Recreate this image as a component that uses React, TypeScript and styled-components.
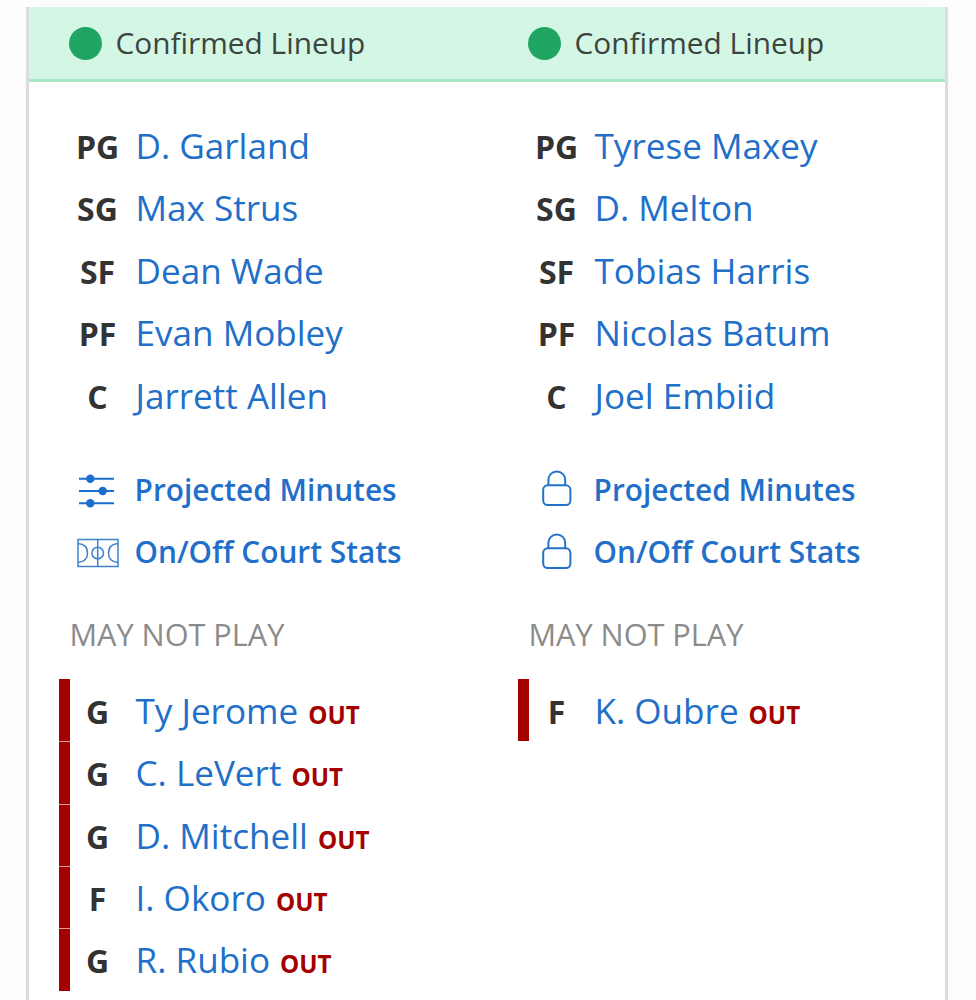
import React from "react";
import styled, { createGlobalStyle } from "styled-components";

const Global = createGlobalStyle`
  *{box-sizing:border-box}
  body{margin:0;background:#fefefe;font-family:"Open Sans",sans-serif;overflow:hidden}
  ul{list-style:none;margin:0;padding:0}
`;
const Page = styled.div`height:1000px;padding:7px 28px 0 26px;overflow:hidden;`;
const Card = styled.main`
  height:993px;background:#fff;border:solid #dcdcdc;border-width:0 3px;
  box-shadow:0 0 16px rgba(0,0,0,.025);
  display:grid;grid-template-columns:459px 1fr;
`;
const Team = styled.section`min-width:0;`;
const Status = styled.header`
  height:75px;background:#d4f6e5;border-bottom:3px solid #a6e9c9;padding-left:40px;
  display:flex;align-items:center;gap:13.6px;font-size:29.8px;color:#3b4540;
`;
const StatusText = styled.span`line-height:40px;`;
const Dot = styled.span`width:33px;height:33px;border-radius:50%;background:#20a662;`;
const List = styled.ul<{ $top: number }>`padding-top:${p => p.$top}px;`;
const Row = styled.li`
  height:62.4px;line-height:62px;margin-left:30px;padding-left:18px;
  display:flex;align-items:baseline;
`;
const OutRow = styled(Row)`
  padding-left:7px;border-left:11px solid transparent;
  background:linear-gradient(#a50000,#a50000) 0 0 / 11px 100% no-repeat border-box;
  & + &{
    background:
      linear-gradient(#dda0a0,#dda0a0) 0 0 / 11px 1px no-repeat border-box,
      linear-gradient(#a50000,#a50000) 0 0 / 11px 100% no-repeat border-box;
  }
  background-origin:border-box;
`;
const ToolRow = styled.li`
  height:62.4px;margin-left:48px;display:flex;align-items:center;
  svg{margin-top:2px;}
`;
const Position = styled.span`width:41px;font-weight:700;font-size:32px;color:#333;display:flex;justify-content:center;`;
const Player = styled.a`margin-left:17.5px;font-size:35.1px;color:#226fc9;white-space:nowrap;`;
const Tool = styled.a`margin-left:15.6px;font-size:29.8px;font-weight:600;color:#226fc9;white-space:nowrap;`;
const Out = styled.span`margin-left:10px;font-size:24.2px;font-weight:700;color:#a50000;`;
const Title = styled.h2`margin:30px 0 0 40.4px;font-size:30.7px;line-height:42px;font-weight:400;color:#8b8b8b;white-space:nowrap;`;

const Sliders = () => (
  <svg width="42" height="36" viewBox="0 0 42 36" fill="none" stroke="#196fd0" strokeWidth="2">
    <path d="M2 6.7H37M2 19H37M2 31.2H37" />
    <g fill="#196fd0" stroke="none"><circle cx="13.3" cy="6.7" r="4.2" /><circle cx="25.7" cy="19" r="4.2" /><circle cx="13.3" cy="31.2" r="4.2" /></g>
  </svg>
);
const Court = () => (
  <svg width="42" height="30" viewBox="0 0 42 30" fill="none" stroke="#3f82cc" strokeWidth="1.5">
    <path d="M1 1.5H41V28.5H1ZM20.7 1.5V28.5M1 5.5C7.5 6 10.5 10 10.5 15S7.5 24 1 24.5M41 5.5C34.5 6 31.5 10 31.5 15S34.5 24 41 24.5" />
    <circle cx="20.7" cy="15" r="5.8" />
  </svg>
);
const Lock = () => (
  <svg width="42" height="40" viewBox="0 0 42 40" fill="none" stroke="#2472c8" strokeWidth="2">
    <rect x="7.2" y="15.3" width="27.2" height="19.7" rx="4.5" />
    <path d="M12.4 15.3V9.8A8.4 8.4 0 0 1 29.2 9.8V15.3" />
  </svg>
);

type Entry = [string, string];
const Lineup = ({ starters, out, locked }: { starters: Entry[]; out: Entry[]; locked?: boolean }) => (
  <Team>
    <Status><Dot /><StatusText>Confirmed Lineup</StatusText></Status>
    <List $top={32}>{starters.map(([p, n]) => <Row key={n}><Position>{p}</Position><Player>{n}</Player></Row>)}</List>
    <List $top={32}>
      <ToolRow>{locked ? <Lock /> : <Sliders />}<Tool>Projected Minutes</Tool></ToolRow>
      <ToolRow>{locked ? <Lock /> : <Court />}<Tool>On/Off Court Stats</Tool></ToolRow>
    </List>
    <Title>MAY NOT PLAY</Title>
    <List $top={24.2}>{out.map(([p, n]) => <OutRow key={n}><Position>{p}</Position><Player>{n}</Player><Out>OUT</Out></OutRow>)}</List>
  </Team>
);

export default function App() {
  return <><Global /><Page><Card>
    <Lineup starters={[["PG","D. Garland"],["SG","Max Strus"],["SF","Dean Wade"],["PF","Evan Mobley"],["C","Jarrett Allen"]]} out={[["G","Ty Jerome"],["G","C. LeVert"],["G","D. Mitchell"],["F","I. Okoro"],["G","R. Rubio"]]} />
    <Lineup locked starters={[["PG","Tyrese Maxey"],["SG","D. Melton"],["SF","Tobias Harris"],["PF","Nicolas Batum"],["C","Joel Embiid"]]} out={[["F","K. Oubre"]]} />
  </Card></Page></>;
}
